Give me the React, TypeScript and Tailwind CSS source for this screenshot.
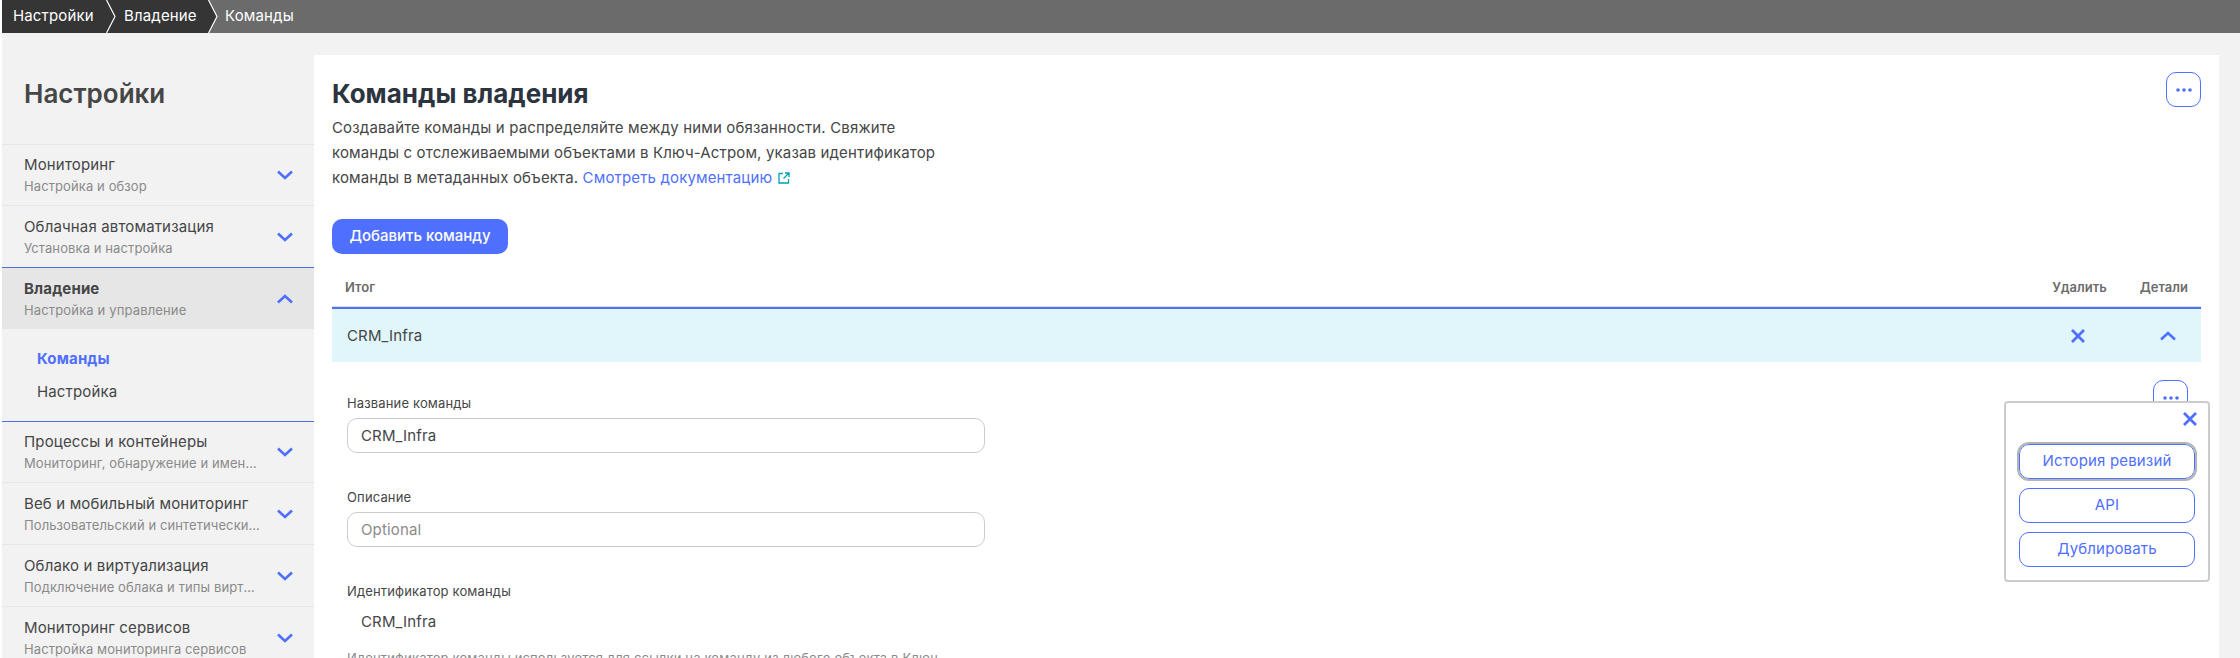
import { useState } from 'react';

const BLUE = 'text-[#4f6fff]';

interface NavItemProps {
  title: string;
  subtitle: string;
  last?: boolean;
  tall?: boolean;
}

function Chevron({ up = false, className = '' }: { up?: boolean; className?: string }) {
  return (
    <svg width="16" height="10" viewBox="0 0 16 10" fill="none" className={className}>
      <path
        d={up ? 'M1 8.5 8 2l7 6.5' : 'M1 1.5 8 8l7-6.5'}
        stroke="currentColor"
        strokeWidth="2.6"
      />
    </svg>
  );
}

function Cross({ className = '' }: { className?: string }) {
  return (
    <svg width="14" height="14" viewBox="0 0 14 14" fill="none" className={className}>
      <path d="M1 1l12 12M13 1 1 13" stroke="currentColor" strokeWidth="2.800" />
    </svg>
  );
}

function Dots() {
  return (
    <svg width="16" height="4" viewBox="0 0 16 4" className={BLUE}>
      <circle cx="2" cy="2" r="1.8" fill="currentColor" />
      <circle cx="8" cy="2" r="1.8" fill="currentColor" />
      <circle cx="14" cy="2" r="1.8" fill="currentColor" />
    </svg>
  );
}

function CrumbArrow({ nextLight = false }: { nextLight?: boolean }) {
  return (
    <svg width="10" height="33" viewBox="0 0 10 33" fill="none" className="shrink-0">
      <rect width="10" height="33" fill={nextLight ? '#6b6b6b' : '#353535'} />
      <path d="M0 0h.5L9 16.5.5 33H0z" fill="#353535" />
      <path d="M.5 0 9 16.5.5 33" stroke="#fff" strokeWidth="1.2" />
    </svg>
  );
}

function NavItem({ title, subtitle, last, tall }: NavItemProps) {
  return (
    <div
      className={`flex items-center justify-between pl-[22px] pr-[21px] ${tall ? 'h-[62px]' : 'h-[61px]'} ${
        last ? '' : 'border-b border-[#e6e6e6]'
      }`}
    >
      <div className="w-[237px] min-w-0">
        <div className="truncate text-[15px] leading-[20px] text-[#454646]">{title}</div>
        <div className="mt-[2px] truncate text-[13px] leading-[18px] tracking-[0.1px] text-[#8a8a8a]">{subtitle}</div>
      </div>
      <Chevron className={`${BLUE} shrink-0`} />
    </div>
  );
}

function Sidebar() {
  return (
    <aside className="w-[312px] shrink-0">
      <h1 className="h-[89px] pl-[22px] pt-[21px] text-[26px] leading-[36px] font-semibold tracking-normal text-[#454646]">
        Настройки
      </h1>
      <div className="border-t border-[#e6e6e6]">
        <NavItem title="Мониторинг" subtitle="Настройка и обзор" />
        <NavItem title="Облачная автоматизация" subtitle="Установка и настройка" last />
      </div>
      <div className="border-y border-[#4f6fe8]">
        <div className="flex h-[61px] items-center justify-between bg-[#e6e6e6] pl-[22px] pr-[21px]">
          <div>
            <div className="text-[15px] leading-[20px] font-bold text-[#454646]">Владение</div>
            <div className="mt-[2px] text-[13px] leading-[18px] text-[#8a8a8a]">Настройка и управление</div>
          </div>
          <Chevron up className={BLUE} />
        </div>
        <div className="flex h-[92px] flex-col gap-[13px] pl-[35px] pt-[20px] text-[15px] leading-[20px]">
          <div className="font-bold text-[#4f6fff]">Команды</div>
          <div className="text-[#454646]">Настройка</div>
        </div>
      </div>
      <NavItem title="Процессы и контейнеры" subtitle="Мониторинг, обнаружение и именование" />
      <NavItem tall title="Веб и мобильный мониторинг" subtitle="Пользовательский и синтетический мониторинг" />
      <NavItem tall title="Облако и виртуализация" subtitle="Подключение облака и типы виртуализации" />
      <NavItem tall title="Мониторинг сервисов" subtitle="Настройка мониторинга сервисов" last />
    </aside>
  );
}

function Field({ label, value, placeholder }: { label: string; value?: string; placeholder?: string }) {
  return (
    <div>
      <div className="mb-[6px] text-[13px] leading-[18px] text-[#454646]">{label}</div>
      <div
        className={`flex h-[35px] w-[638px] items-center rounded-[10px] border border-[#cccccc] px-[13px] pt-[1px] text-[15px] ${
          value ? 'text-[#454646]' : 'text-[#8a8a8a]'
        }`}
      >
        {value ?? placeholder}
      </div>
    </div>
  );
}

function ActionMenu() {
  return (
    <div className="absolute left-[1690px] top-[346px] h-[181px] w-[206px] rounded-[4px] border-2 border-[#cccccc] bg-white">
      <div className="flex justify-end pr-[11px] pt-[9px]">
        <Cross className={BLUE} />
      </div>
      <div className="mt-[18px] flex flex-col items-center gap-[9px] text-[15px] text-[#4f6fff]">
        <button className="h-[35px] w-[176px] rounded-[10px] border border-[#4f6fff] outline-2 outline-offset-0 outline-[#b5b5b5]">
          История ревизий
        </button>
        <button className="h-[35px] w-[176px] rounded-[10px] border border-[#4f6fff]">API</button>
        <button className="h-[35px] w-[176px] rounded-[10px] border border-[#4f6fff]">Дублировать</button>
      </div>
    </div>
  );
}

export default function App() {
  const [name] = useState('CRM_Infra');

  return (
    <div className="h-[658px] overflow-hidden bg-white font-['Inter',sans-serif] tracking-[0.15px]">
      {/* Breadcrumbs */}
      <nav className="ml-[2px] flex h-[33px] items-center bg-[#6b6b6b] text-[15px] text-white">
        <span className="flex h-full w-[104px] items-center bg-[#353535] pl-[11px]">Настройки</span>
        <CrumbArrow />
        <span className="flex h-full w-[92px] items-center bg-[#353535] pl-[8px]">Владение</span>
        <CrumbArrow nextLight />
        <span className="pl-[7px]">Команды</span>
      </nav>

      <div className="ml-[2px] flex h-[625px] bg-[#f2f2f2] pt-[22px] pr-[21px]">
        <Sidebar />

        {/* Content */}
        <main className="relative min-w-0 flex-1 bg-white px-[18px]">
          <button className="absolute right-[18px] top-[17px] flex h-[35px] w-[35px] items-center justify-center rounded-[10px] border border-[#4f6fff]">
            <Dots />
          </button>

          <h2 className="pt-[22px] text-[26px] leading-[34px] font-bold tracking-normal text-[#2c3440]">Команды владения</h2>
          <p className="mt-[4px] w-[620px] text-[15px] leading-[25px] text-[#454646]">
            Создавайте команды и распределяйте между ними обязанности. Свяжите команды с отслеживаемыми объектами в
            Ключ-Астром, указав идентификатор команды в метаданных объекта.{' '}
            <a className="text-[#4f6fff]">Смотреть документацию</a>
            <svg width="12" height="12" viewBox="0 0 12 12" fill="none" className="ml-[6px] inline-block align-[-1px] text-[#00a1b2]">
              <path d="M5 1.5H1v9.500h9.500V7M7 1h4v4M11 1 5.500 6.500" stroke="currentColor" strokeWidth="1.300" />
            </svg>
          </p>

          <button className="mt-[29px] block h-[35px] w-[176px] rounded-[10px] bg-[#4f6fff] text-[15px] font-medium tracking-normal text-white">
            Добавить команду
          </button>

          {/* Table */}
          <div className="mt-[15px] flex h-[38px] items-center gap-[33px] border-b border-[#dcdcdc] pr-[13px] pl-[13px] text-[13px] font-semibold tracking-normal text-[#6b6b6b]">
            <span className="flex-1">Итог</span>
            <span>Удалить</span>
            <span>Детали</span>
          </div>
          <div className="flex h-[55px] items-center border-t-[2px] border-[#4f6fff] bg-[#e0f6fa] pl-[15px] pt-[1px] text-[15px] text-[#454646]">
            <span className="flex-1">{name}</span>
            <Cross className={`${BLUE} mr-[75px]`} />
            <Chevron up className={`${BLUE} mr-[25px]`} />
          </div>

          {/* Row details */}
          <div className="relative pl-[15px] pt-[32px]">
            <button className="absolute right-[13px] top-[18px] flex h-[35px] w-[35px] items-center justify-center rounded-[10px] border border-[#4f6fff]">
              <Dots />
            </button>
            <Field label="Название команды" value={name} />
            <div className="mt-[35px]">
              <Field label="Описание" placeholder="Optional" />
            </div>
            <div className="mt-[35px] text-[13px] leading-[18px] text-[#454646]">Идентификатор команды</div>
            <div className="mt-[12px] pl-[14px] text-[15px] leading-[20px] text-[#454646]">{name}</div>
            <p className="mt-[17px] w-[638px] text-[13px] leading-[18px] text-[#8a8a8a]">
              Идентификатор команды используется для ссылки на команду из любого объекта в Ключ-Астром.
            </p>
          </div>

          <ActionMenu />
        </main>
      </div>
    </div>
  );
}
